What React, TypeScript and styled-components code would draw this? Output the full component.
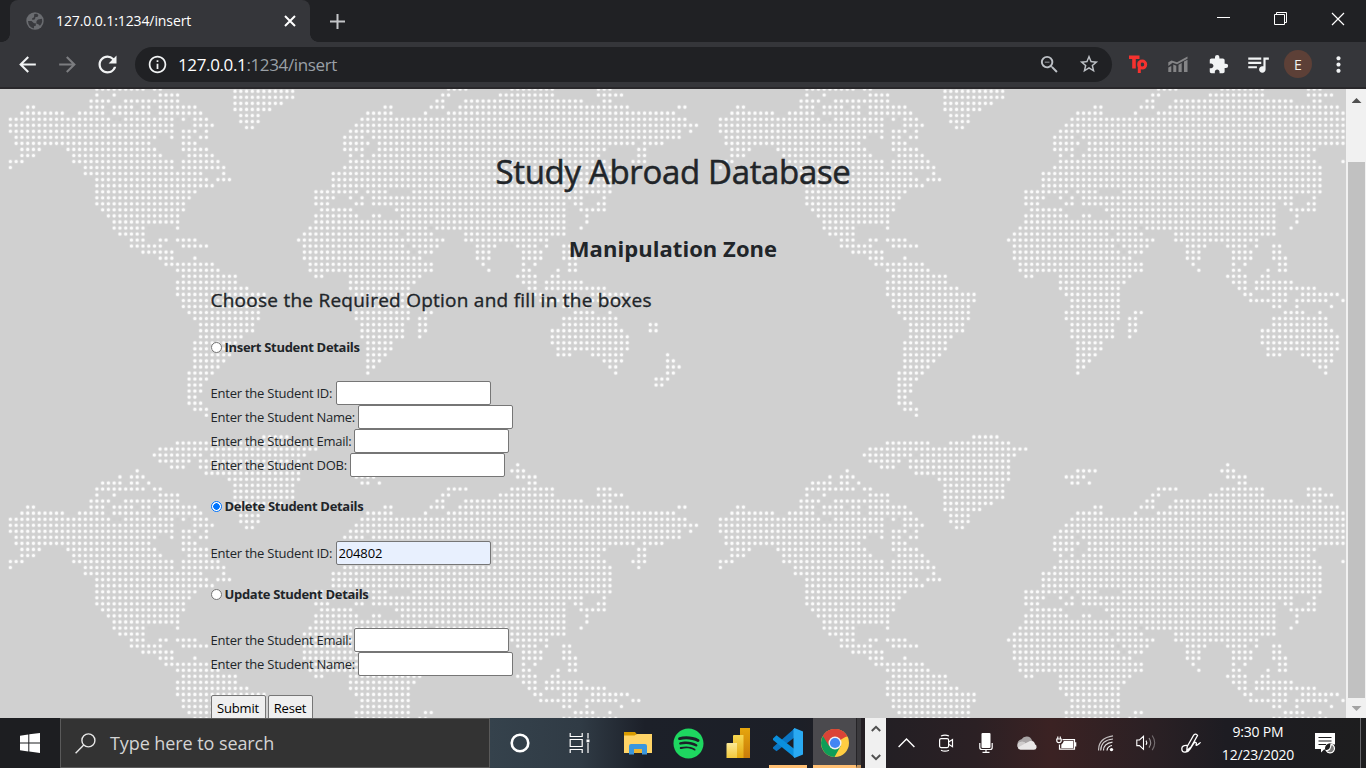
import React from 'react';
import styled, { createGlobalStyle } from 'styled-components';
import {
  MdArrowBack,
  MdArrowForward,
  MdRefresh,
  MdInfoOutline,
  MdZoomOut,
  MdStarBorder,
  MdExtension,
  MdQueueMusic,
  MdMoreVert,
} from 'react-icons/md';
import { FaSpotify } from 'react-icons/fa';

const GlobalStyle = createGlobalStyle`
  *, *::before, *::after { box-sizing: border-box; }
  body {
    margin: 0;
    overflow: hidden;
    font-family: "Open Sans", "Noto Sans", sans-serif;
    color: #212529;
  }
  svg { display: block; flex: none; }
`;

/* ---------- dotted world map ---------- */

type Run = [number, number?];

/* Filled column ranges of every dot row, north to south. */
const LAND: string[] = [
  '88',
  '22 62-65 87-89',
  '19 21-23 60-63 88-91',
  '16-19 21-22 24 61-62 64 90-91',
  '15-23 25-26 76-79 87-94 102-104',
  '15 18 26-29 75-76 85-94 102-106',
  '14-17 20-29 74-75 79-99 103-104',
  '3-4 14-16 18-21 23-24 26-32 65-66 73-75 78-107 116-117',
  '2-9 12-16 18-24 26-33 62-66 72 76-115',
  '0-17 20-28 30 32-34 61-117',
  '0-28 32-35 60-119',
  '0-28 30-32 34 59-116 118',
  '1-25 28 30-31 33-34 58-61 63-116',
  '1-24 30-32 58-62 64-108 110-113',
  '2-5 10-25 30-34 58-61 64-103 109-110',
  '2-4 11-26 31-35 59 61 63-102 109-110',
  '0-2 11-28 30-36 59-103 108-110',
  '0 13-28 30-37 58-104 109',
  '13-33 37 56-104',
  '15-34 36-38 56-104',
  '15-35 56-104',
  '15-32 53-60 62-65 70-104',
  '15-31 53-56 59 61 63-99 103',
  '15-30 53-55 60-61 63-96 98-99 102-103',
  '16-30 54-59 67-96 99-103',
  '17-29 53-60 63-64 68-96 100',
  '18-29 53-96 100',
  '18-23 29 52-72 74-96 99',
  '19-23 51-67 69-73 79-96',
  '21-23 26-27 29-32 50-75 79-93',
  '21-26 30-34 51-68 70-74 81-84 88-91 93 96-97',
  '23-28 51-69 71-73 81-83 89-92 96-97',
  '26-28 32 51-71 81-83 89-92 96-98',
  '27-35 52-73 82 89 91 97-98',
  '29-36 52-73 83 89-90 95 97-98',
  '30-39 53-54 59-71 88-91 94-95',
  '29-39 59-70 89-91 93-99',
  '29-41 59-69 90-91 93-103',
  '29-44 60-69 91-92 96-98 101-107',
  '30-44 61-69 92-98 100-105 108-109',
  '30-43 61-69 96-97 100 106',
  '31-43 60-69 72-73 98-101 104',
  '32-43 60-69 71-72 96-105',
  '33-42 61-68 71-72 96-105 111-112',
  '33-42 61-68 71-72 94-106 111-112',
  '33-40 61-68 71 94-107',
  '32-39 62-66 94-107',
  '32-39 62-66 95-107',
  '32-38 62-65 95-97 101-106 114',
  '32-37 62-64 103-106 114-115',
  '32-36 62-63 104-105 114-116',
  '31-35 62 105 114-115',
  '31-34 112-114',
  '31-33 112-113',
  '31-33',
  '31-32',
  '31-33',
  '32-34',
  '34',
];

/* Greenland and the arctic islands sit on rows of their own. */
const ARCTIC: string[] = [
  '44-48',
  '29-36 40-50',
  '26-53',
  '25-33 35-51',
  '26-31 33-50',
  '28-30 33-50',
  '34-50',
  '38-50',
  '39-49',
  '39-49',
  '39-49',
  '39-47',
  '39-45',
  '40-43',
  '40-43',
  '41-42',
];

const COLUMN = 5.765;
const ROW = 6.042;

const dots = (rows: string[], left: number, top: number): string =>
  rows
    .map((row, r) =>
      row
        .split(' ')
        .map((part) => part.split('-').map(Number) as Run)
        .map(([from, to = from]) => {
          let d = '';
          for (let k = from; k <= to; k += 1) {
            d += `M${(left + k * COLUMN).toFixed(2)} ${(top + r * ROW).toFixed(2)}h0`;
          }
          return d;
        })
        .join(''),
    )
    .join('');

const MAP_PATH = dots(LAND, 10.4, 47.8) + dots(ARCTIC, 10.2, 19.9);

const MapLayer = styled.svg`
  position: absolute;
  inset: 0;
  width: 100%;
  height: 100%;
`;

const WorldMap = () => (
  <MapLayer aria-hidden="true">
    <defs>
      <pattern id="world" x="0" y="328" width="710" height="400" patternUnits="userSpaceOnUse">
        <path d={MAP_PATH} stroke="#fff" strokeOpacity="0.24" strokeWidth="4.6" strokeLinecap="round" />
        <path d={MAP_PATH} stroke="#fff" strokeOpacity="0.88" strokeWidth="3.1" strokeLinecap="round" />
      </pattern>
    </defs>
    <rect width="100%" height="100%" fill="url(#world)" />
  </MapLayer>
);

/* ---------- browser frame ---------- */

const Screen = styled.div`
  width: 1366px;
  height: 768px;
  display: flex;
  flex-direction: column;
  overflow: hidden;
`;

const TabStrip = styled.div`
  height: 42px;
  flex: none;
  display: flex;
  background: #202124;
`;

const Tab = styled.div`
  position: relative;
  margin-left: 10px;
  width: 300px;
  height: 42px;
  display: flex;
  align-items: center;
  padding: 0 14px 0 16px;
  background: #35363a;
  border-radius: 8px 8px 0 0;
  &::before, &::after {
    content: "";
    position: absolute;
    bottom: 0;
    width: 8px;
    height: 8px;
  }
  &::before {
    left: -8px;
    background: radial-gradient(circle at 0 0, #202124 7.5px, #35363a 8px);
  }
  &::after {
    right: -8px;
    background: radial-gradient(circle at 100% 0, #202124 7.5px, #35363a 8px);
  }
`;

const TabTitle = styled.span`
  flex: 1;
  margin-left: 12px;
  color: #fff;
  font-size: 14px;
  letter-spacing: -0.1px;
  line-height: 20px;
`;

const NewTab = styled.div`
  width: 54px;
  display: flex;
  align-items: center;
  justify-content: center;
`;

const WindowControls = styled.div`
  margin-left: auto;
  height: 37px;
  display: flex;
`;

const WindowButton = styled.div`
  width: 57px;
  display: flex;
  align-items: center;
  justify-content: center;
`;

const Toolbar = styled.div`
  height: 47px;
  flex: none;
  display: flex;
  align-items: center;
  padding: 0 7px 1px 7px;
  background: #35363a;
  border-bottom: 2px solid #29282b;
`;

const ToolSlot = styled.div<{ $color?: string }>`
  width: 40px;
  height: 36px;
  flex: none;
  display: flex;
  align-items: center;
  justify-content: center;
  color: ${(p) => p.$color ?? '#f1f3f4'};
`;

const Omnibox = styled.div`
  width: 977px;
  height: 35px;
  margin: 0 6px 0 8px;
  padding: 0 3px 0 12px;
  flex: none;
  display: flex;
  align-items: center;
  border-radius: 18px;
  background: #202124;
  color: #f1f3f4;
`;

const Address = styled.span`
  flex: 1;
  margin-left: 10px;
  font-size: 17px;
  letter-spacing: -0.37px;
  color: #9aa0a6;
  b { font-weight: 400; color: #fff; }
`;

const Avatar = styled.div`
  width: 28px;
  height: 28px;
  border-radius: 50%;
  background: #5d4037;
  color: #f1f1f1;
  font: 14px/29px "Open Sans", sans-serif;
  text-align: center;
`;

/* ---------- page ---------- */

const Viewport = styled.div`
  height: 629px;
  flex: none;
  display: flex;
`;

const Page = styled.main`
  position: relative;
  width: 1346px;
  overflow: hidden;
  background: #d0d0d0;
`;

const Content = styled.div`
  position: relative;
  width: 925px;
  margin: 0 auto;
  padding-top: 61px;
`;

const Title = styled.h1`
  margin: 0;
  font-size: 33px;
  line-height: 44px;
  font-weight: 400;
  text-align: center;
  letter-spacing: -0.33px;
  -webkit-text-stroke: 0.5px #212529;
`;

const Subtitle = styled.h2`
  margin: 41px 0 0;
  font-size: 22px;
  line-height: 26px;
  font-weight: 700;
  text-align: center;
  letter-spacing: 0.05px;
`;

const Prompt = styled.h3`
  margin: 27px 0 0;
  font-size: 19px;
  line-height: 24px;
  font-weight: 400;
  letter-spacing: 0.25px;
  -webkit-text-stroke: 0.35px #212529;
`;

const Option = styled.label<{ $top: number }>`
  display: flex;
  align-items: center;
  height: 22px;
  margin-top: ${(p) => p.$top}px;
  font-size: 13px;
  font-weight: 700;
  letter-spacing: -0.31px;
`;

const Radio = styled.input.attrs({ type: 'radio' })`
  appearance: none;
  width: 11px;
  height: 11px;
  margin: 0 3px 0 0;
  border: 1px solid #767676;
  border-radius: 50%;
  background: #fff;
  &:checked {
    border-color: #0075ff;
    background: radial-gradient(circle, #0075ff 3px, #fff 3.5px);
  }
`;

const Fields = styled.div<{ $top: number }>`
  margin-top: ${(p) => p.$top}px;
`;

const Field = styled.div`
  display: flex;
  align-items: center;
  height: 24px;
`;

const FieldLabel = styled.label<{ $width: number }>`
  width: ${(p) => p.$width}px;
  flex: none;
  white-space: nowrap;
  font-size: 13px;
  line-height: 22px;
  letter-spacing: -0.23px;
`;

const TextBox = styled.input<{ $filled?: boolean }>`
  width: 155px;
  height: 24px;
  padding: 1px 2px;
  border: 1px solid #767676;
  border-radius: 2px;
  outline: 0;
  background: ${(p) => (p.$filled ? '#e8f0fe' : '#fff')};
  color: #000;
  font: 13px "Open Sans", sans-serif;
  letter-spacing: -0.15px;
`;

const Buttons = styled.div`
  display: flex;
  gap: 2px;
  margin-top: 19px;
`;

const FormButton = styled.button<{ $width: number }>`
  width: ${(p) => p.$width}px;
  height: 26px;
  padding: 0;
  border: 1px solid #767676;
  border-radius: 2px;
  background: #efefef;
  color: #000;
  font: 13px "Open Sans", sans-serif;
  letter-spacing: -0.15px;
`;

const Scrollbar = styled.div`
  width: 20px;
  display: flex;
  flex-direction: column;
  align-items: center;
  background: #f1f1f1;
`;

const ScrollThumb = styled.div`
  width: 17px;
  height: 536px;
  margin: 54px 0 10px 1px;
  background: #c1c1c1;
`;

const ScrollArrow = styled.div<{ $down?: boolean }>`
  width: 10px;
  height: 5px;
  margin: ${(p) => (p.$down ? '-2px' : '9px')} 0 5px 1px;
  background: ${(p) => (p.$down ? '#a3a3a3' : '#505050')};
  clip-path: ${(p) => (p.$down ? 'polygon(0 0, 100% 0, 50% 100%)' : 'polygon(0 100%, 100% 100%, 50% 0)')};
`;

interface FieldSpec {
  label: string;
  width: number;
  value?: string;
}

const FieldGroup = ({ top, fields }: { top: number; fields: FieldSpec[] }) => (
  <Fields $top={top}>
    {fields.map((f) => (
      <Field key={f.label}>
        <FieldLabel $width={f.width}>{f.label}</FieldLabel>
        <TextBox $filled={!!f.value} defaultValue={f.value} />
      </Field>
    ))}
  </Fields>
);

/* ---------- taskbar ---------- */

const Taskbar = styled.footer`
  height: 50px;
  flex: none;
  display: flex;
  color: #fff;
  background: #1d1e21;
`;

const StartButton = styled.div`
  width: 60px;
  flex: none;
  display: flex;
  align-items: center;
  justify-content: center;
`;

const SearchBox = styled.div`
  width: 430px;
  flex: none;
  display: flex;
  align-items: center;
  padding-left: 14px;
  border: 1px solid #5a5a5a;
  background: #333;
  color: #d4d4d4;
  font-size: 18px;
  letter-spacing: -0.08px;
`;

const SearchText = styled.span`
  margin-left: 14px;
`;

const Apps = styled.div`
  width: 375px;
  flex: none;
  display: flex;
  background: linear-gradient(90deg, #35424c 0, #303b45 90px, #1c2029 155px, #1c1f27 310px, #241f23 375px);
`;

const AppSlot = styled.div<{ $width: number; $running?: boolean; $active?: boolean }>`
  width: ${(p) => p.$width}px;
  flex: none;
  display: flex;
  align-items: center;
  justify-content: center;
  background: ${(p) => (p.$active ? '#4b4a4e' : 'none')};
  border-bottom: ${(p) => (p.$running ? '3px solid #ffbf73' : '0')};
  padding-top: ${(p) => (p.$running ? '3px' : '0')};
`;

const StackEdge = styled.div`
  width: 5px;
  background: #3a393c;
  border-left: 1px solid #252427;
  border-bottom: 3px solid #c9985f;
`;

const MiniScroll = styled.div`
  width: 21px;
  flex: none;
  display: flex;
  flex-direction: column;
  align-items: center;
  justify-content: space-between;
  padding: 7px 0 7px;
  background: #f0f0f0;
`;

const Tray = styled.div`
  flex: 1;
  display: flex;
  align-items: center;
  background: linear-gradient(90deg, #231f24 0, #2b2024 90px, #3b2223 165px, #2a2024 270px, #1d1c22 340px, #1d1d1e 480px);
`;

const TraySlot = styled.div<{ $width?: number }>`
  width: ${(p) => p.$width ?? 40}px;
  flex: none;
  display: flex;
  justify-content: center;
`;

const Clock = styled.div`
  width: 86px;
  flex: none;
  text-align: center;
  font-size: 14px;
  line-height: 23px;
  letter-spacing: -0.2px;
  white-space: nowrap;
  color: #fff;
`;

const PeekEdge = styled.div`
  margin-left: auto;
  width: 6px;
  height: 50px;
  border-left: 1px solid #67676a;
`;

/* ---------- icons ---------- */

const GlobeIcon = () => (
  <svg width="18" height="18" viewBox="0 0 18 18">
    <circle cx="9" cy="9" r="8.7" fill="#6a6c70" />
    <path d="M2 9h3.500l2.500 2.300h1.800v2.400L8 14.200v2.200Q2.300 15.300 2 9zM8.300 2 11 1.800l1.400 1.500-1 1.700H9.500L9 7.200 6.500 8 6 6.500l2-1.300zM12 7.500l3.900-.7.300 2.700q-.5 2.600-2.300 4.300l-1.600-1.600-2-.6.200-2.600z" fill="#393a3e" />
  </svg>
);

const CrossIcon = ({ size, stroke }: { size: number; stroke: number }) => (
  <svg width={size} height={size} viewBox={`0 0 ${size} ${size}`}>
    <path d={`M1 1 ${size - 1} ${size - 1}M${size - 1} 1 1 ${size - 1}`} stroke="#fff" strokeWidth={stroke} />
  </svg>
);

const TpIcon = () => (
  <svg width="20" height="20" viewBox="0 0 20 20" fill="none" stroke="#f5322f">
    <path d="M1 3.200H11.500M6 3V14.500" strokeWidth="3.600" />
    <path d="M11.300 7.500V19" strokeWidth="3" />
    <circle cx="14.200" cy="10.600" r="3.500" strokeWidth="3" />
  </svg>
);

const ChartIcon = () => (
  <svg width="20" height="18" viewBox="0 0 20 18" fill="#858587">
    <path d="M.3 12.500l3-1.600V17h-3zM5.300 9.500l3 1.200V17h-3zM10.500 9.800 13.700 8v9h-3.200zM16 6.600l3.500-1.800V17H16z" />
    <path d="M.3 11V7.300L3.600 5.500 9 7.300 19.500 1.500v2.200L9 9.300 4.600 7.800z" />
  </svg>
);

const StartIcon = () => (
  <svg width="20" height="20" viewBox="0 0 20 20" fill="#fff">
    <path d="M0 2.700 8.300 1.500V9.400H0zM9.300 1.300 20 0v9.400H9.300zM0 10.400h8.300v8L0 17.300zM9.300 10.400H20V20L9.300 18.600z" />
  </svg>
);

const SearchIcon = () => (
  <svg width="21" height="21" viewBox="0 0 21 21" fill="none" stroke="#e8e8e8" strokeWidth="1.400">
    <circle cx="13.400" cy="7.400" r="6.500" />
    <path d="M8.700 12 .6 20.200" />
  </svg>
);

const TaskViewIcon = () => (
  <svg width="22" height="20" viewBox="0 0 22 20" fill="none" stroke="#fff" strokeWidth="1.200">
    <path d="M1.200 0v3.500h12V0M1.200 20v-3.500h12V20M1.200 6.500h12v7h-12zM19 0v5.500M19 10v10" />
    <path d="M17.500 6.500h3v2.800h-3z" fill="#fff" stroke="none" />
  </svg>
);

const ExplorerIcon = () => (
  <svg width="28" height="24" viewBox="0 0 28 24">
    <path d="M0 1h11l2 2.500V8H0z" fill="#d99b00" />
    <path d="M0 4.500h10.500L13 3h15v19H0z" fill="#ffd467" />
    <path d="M5 23.500V15q0-2 2-2h14q2 0 2 2v8.500h-5v-5.500h-8v5.500z" fill="#3a96dd" />
    <path d="M10 18h8v4h-8z" fill="#ecb432" />
  </svg>
);

const PowerBiIcon = () => (
  <svg width="24" height="30" viewBox="0 0 24 30">
    <defs>
      <linearGradient id="pb1" x2="0" y2="1"><stop stopColor="#e6a60d" /><stop offset="1" stopColor="#c87b0b" /></linearGradient>
      <linearGradient id="pb2" x2="0" y2="1"><stop stopColor="#f6d751" /><stop offset="1" stopColor="#e4a80f" /></linearGradient>
      <linearGradient id="pb3" x2="0" y2="1"><stop stopColor="#fbe995" /><stop offset="1" stopColor="#f3c93c" /></linearGradient>
    </defs>
    <path d="M14 0h10v30H14z" fill="url(#pb1)" />
    <path d="M7 8q0-1 1-1h9.500v23H7z" fill="url(#pb2)" />
    <path d="M.5 16q0-1 1-1H11v15H.5z" fill="url(#pb3)" />
  </svg>
);

const CodeIcon = () => (
  <svg width="30" height="30" viewBox="0 0 30 30">
    <path d="M22 0v9L3.500 23.300 0 20.500v-1.200z" fill="#0a76c4" />
    <path d="M0 10.600 3.500 7.200 22 21.500v8.300L0 12z" fill="#0a8fdd" />
    <path d="M21.500 0 30 3.500v23L21.500 30l-1-1.500V1.200z" fill="#2aaaf2" />
  </svg>
);

const ChromeIcon = () => (
  <svg width="28" height="28" viewBox="0 0 28 28">
    <circle cx="14" cy="14" r="14" fill="#ffcd42" />
    <path d="M14 14 1.900 7A14 14 0 0 1 26.100 7z" fill="#db4437" />
    <path d="M1.900 7A14 14 0 0 0 13.500 28L19.600 17.200 14 14z" fill="#0f9d58" />
    <path d="M14 7.500h12.400A14 14 0 0 0 1.900 7l6.200 10z" fill="#db4437" />
    <circle cx="14" cy="14" r="6.500" fill="#f1f1f1" />
    <circle cx="14" cy="14" r="5.100" fill="#4285f4" />
  </svg>
);

const Caret = ({ down }: { down?: boolean }) => (
  <svg width="10" height="7" viewBox="0 0 10 7" fill="none" stroke="#505050" strokeWidth="2">
    <path d={down ? 'M.8 1 5 5.200 9.200 1' : 'M.8 6 5 1.800 9.200 6'} />
  </svg>
);

const ChevronIcon = () => (
  <svg width="17" height="10" viewBox="0 0 17 10" fill="none" stroke="#fff" strokeWidth="1.400">
    <path d="M.6 9 8.500 1l7.900 8" />
  </svg>
);

const MeetIcon = () => (
  <svg width="16" height="18" viewBox="0 0 16 18" fill="none" stroke="#fff" strokeWidth="1.200">
    <rect x="1.600" y="4.600" width="9" height="9" rx="1.500" />
    <path d="M10.600 8 14.500 5.500v7.200L10.600 10.300M3 2Q7 .2 11 2M3 16.200Q7 18 11 16.200" />
  </svg>
);

const MicIcon = () => (
  <svg width="14" height="20" viewBox="0 0 14 20" fill="none" stroke="#fff" strokeWidth="1.200">
    <rect x="2.500" y="0" width="9" height="15" rx="1" fill="#fff" stroke="none" />
    <path d="M.8 10v4.500q0 2 2 2h8.400q2 0 2-2V10M7 16.500v3M3.500 19.300h7" />
  </svg>
);

const CloudIcon = () => (
  <svg width="21" height="14" viewBox="0 0 21 14">
    <path d="M1.500 9A5 5 0 0 1 5.500 3.200 6 6 0 0 1 16 4.200L18.500 8z" fill="#a8a4a5" />
    <path d="M4.500 13.800A4 4 0 0 1 4 6.200Q7 5.200 9.500 7.200L14 5Q18.500 4.500 19 8.300a2.900 2.900 0 0 1-1 5.500z" fill="#e9e7e7" />
    <path d="M4 6.200Q7 5.200 9.500 7.200L2 11.500Q.5 8 4 6.200z" fill="#cfcccc" />
  </svg>
);

const BatteryIcon = () => (
  <svg width="21" height="14" viewBox="0 0 21 14" fill="none" stroke="#fff" strokeWidth="1.200">
    <path d="M6.500 3.600h12v9.600h-15V8.500M19.700 6.200v4.400M.8 3h4.400v1.500q0 2.200-2.200 2.200T.8 4.500zM1.800 3V.6M4.300 3V.6" />
    <path d="M7.800 5h9.500v6.900h-12V8.500Q7 7.500 7.800 5z" fill="#fff" stroke="none" />
  </svg>
);

const WifiIcon = () => (
  <svg width="16" height="17" viewBox="0 0 16 17" fill="none" stroke="#fff" strokeWidth="1.200">
    <path d="M9 15.500Q9.200 11.500 14 10.500" />
    <path d="M5.500 15.500Q5.500 8.500 14.500 7.200" opacity=".85" />
    <path d="M2.700 15.500Q3 5 15 4" opacity=".8" />
    <path d="M.6 15.500Q.2 3 15 .8" opacity=".7" />
    <circle cx="13.500" cy="14.600" r="1.700" fill="#fff" stroke="none" />
  </svg>
);

const VolumeIcon = () => (
  <svg width="21" height="18" viewBox="0 0 21 18" fill="none" stroke="#fff" strokeWidth="1.100">
    <path d="M.8 6h2.700L7.500 2.300v13L3.500 11.600H.8zM10 6.700q1.500 2 0 4.200" />
    <path d="M13 4q3.400 4.800 0 9.600" opacity=".5" />
    <path d="M16.200 1.500q5 7.300 0 14.600" opacity=".35" />
  </svg>
);

const PenIcon = () => (
  <svg width="20" height="20" viewBox="0 0 20 20" fill="none" stroke="#fff" strokeWidth="1.300">
    <path d="M6.200 13.500 12.800 2q2-1.800 3.700.5L10 14l-4.200 3.500zM6.200 12.500Q.8 12 .8 15.800T4.500 19q3-.3 4.700-3.200L12 11.500q1.200-2.500 2.500-2.200t.7 2.200 1.800 0 2.500-1.500" />
  </svg>
);

const NoticeIcon = () => (
  <svg width="21" height="21" viewBox="0 0 21 21">
    <path d="M0 0h20v11.500h-4l-1 5H9L6 19.500V16H0z" fill="#fff" />
    <path d="M3.500 4.500h13M3.500 8h13M3.500 11.500h7.500" stroke="#1d1d1e" strokeWidth="1.100" />
    <circle cx="15.200" cy="15.500" r="5.200" fill="#1d1d1e" />
    <path d="M16 11.200a4.400 4.400 0 1 1-4.800 6.300q4.500.5 4.800-6.300z" fill="#777" stroke="#fff" strokeWidth="1.200" />
  </svg>
);

export default function App() {
  return (
    <Screen>
      <GlobalStyle />
      <TabStrip>
        <Tab>
          <GlobeIcon />
          <TabTitle>127.0.0.1:1234/insert</TabTitle>
          <CrossIcon size={12} stroke={2} />
        </Tab>
        <NewTab>
          <svg width="15" height="15" viewBox="0 0 15 15">
            <path d="M7.500 0v15M0 7.500h15" stroke="#c3c5c8" strokeWidth="2" />
          </svg>
        </NewTab>
        <WindowControls>
          <WindowButton>
            <svg width="13" height="13" viewBox="0 0 13 13"><path d="M0 5.500h13" stroke="#fff" /></svg>
          </WindowButton>
          <WindowButton>
            <svg width="13" height="13" viewBox="0 0 13 13" fill="none" stroke="#fff">
              <path d="M.5 2.500h10v10H.5zM2.500 2.500v-2h10v10h-2" />
            </svg>
          </WindowButton>
          <WindowButton><CrossIcon size={14} stroke={1.2} /></WindowButton>
        </WindowControls>
      </TabStrip>

      <Toolbar>
        <ToolSlot><MdArrowBack size={25} /></ToolSlot>
        <ToolSlot $color="#7c7d80"><MdArrowForward size={25} /></ToolSlot>
        <ToolSlot><MdRefresh size={27} /></ToolSlot>
        <Omnibox>
          <MdInfoOutline size={21} />
          <Address><b>127.0.0.1</b>:1234/insert</Address>
          <ToolSlot $color="#bdc1c6"><MdZoomOut size={23} /></ToolSlot>
          <ToolSlot $color="#bdc1c6"><MdStarBorder size={22} /></ToolSlot>
        </Omnibox>
        <ToolSlot><TpIcon /></ToolSlot>
        <ToolSlot><ChartIcon /></ToolSlot>
        <ToolSlot><MdExtension size={21} /></ToolSlot>
        <ToolSlot><MdQueueMusic size={26} /></ToolSlot>
        <ToolSlot><Avatar>E</Avatar></ToolSlot>
        <ToolSlot><MdMoreVert size={25} /></ToolSlot>
      </Toolbar>

      <Viewport>
        <Page>
          <WorldMap />
          <Content>
            <Title>Study Abroad Database</Title>
            <Subtitle>Manipulation Zone</Subtitle>
            <Prompt>Choose the Required Option and fill in the boxes</Prompt>

            <Option $top={24}><Radio name="action" />Insert Student Details</Option>
            <FieldGroup
              top={23}
              fields={[
                { label: 'Enter the Student ID:', width: 125 },
                { label: 'Enter the Student Name:', width: 147 },
                { label: 'Enter the Student Email:', width: 143.5 },
                { label: 'Enter the Student DOB:', width: 139 },
              ]}
            />

            <Option $top={18}><Radio name="action" defaultChecked />Delete Student Details</Option>
            <FieldGroup top={24} fields={[{ label: 'Enter the Student ID:', width: 125, value: '204802' }]} />

            <Option $top={18}><Radio name="action" />Update Student Details</Option>
            <FieldGroup
              top={23}
              fields={[
                { label: 'Enter the Student Email:', width: 143.5 },
                { label: 'Enter the Student Name:', width: 147 },
              ]}
            />

            <Buttons>
              <FormButton $width={55}>Submit</FormButton>
              <FormButton $width={45}>Reset</FormButton>
            </Buttons>
          </Content>
        </Page>
        <Scrollbar>
          <ScrollArrow />
          <ScrollThumb />
          <ScrollArrow $down />
        </Scrollbar>
      </Viewport>

      <Taskbar>
        <StartButton><StartIcon /></StartButton>
        <SearchBox>
          <SearchIcon />
          <SearchText>Type here to search</SearchText>
        </SearchBox>
        <Apps>
          <AppSlot $width={60}>
            <svg width="20" height="20" viewBox="0 0 20 20">
              <circle cx="10" cy="10" r="8.300" fill="none" stroke="#fff" strokeWidth="2.600" />
            </svg>
          </AppSlot>
          <AppSlot $width={60}><TaskViewIcon /></AppSlot>
          <AppSlot $width={55}><ExplorerIcon /></AppSlot>
          <AppSlot $width={46}><FaSpotify size={31} color="#1ed760" /></AppSlot>
          <AppSlot $width={53}><PowerBiIcon /></AppSlot>
          <AppSlot $width={5} />
          <AppSlot $width={38} $running><CodeIcon /></AppSlot>
          <AppSlot $width={6} />
          <AppSlot $width={43} $running $active><ChromeIcon /></AppSlot>
          <StackEdge />
        </Apps>
        <MiniScroll>
          <Caret />
          <Caret down />
        </MiniScroll>
        <Tray>
          <TraySlot><ChevronIcon /></TraySlot>
          <TraySlot><MeetIcon /></TraySlot>
          <TraySlot><MicIcon /></TraySlot>
          <TraySlot><CloudIcon /></TraySlot>
          <TraySlot><BatteryIcon /></TraySlot>
          <TraySlot><WifiIcon /></TraySlot>
          <TraySlot><VolumeIcon /></TraySlot>
          <TraySlot $width={49}><PenIcon /></TraySlot>
          <Clock>
            9:30 PM
            <br />
            12/23/2020
          </Clock>
          <TraySlot $width={48}><NoticeIcon /></TraySlot>
          <PeekEdge />
        </Tray>
      </Taskbar>
    </Screen>
  );
}
